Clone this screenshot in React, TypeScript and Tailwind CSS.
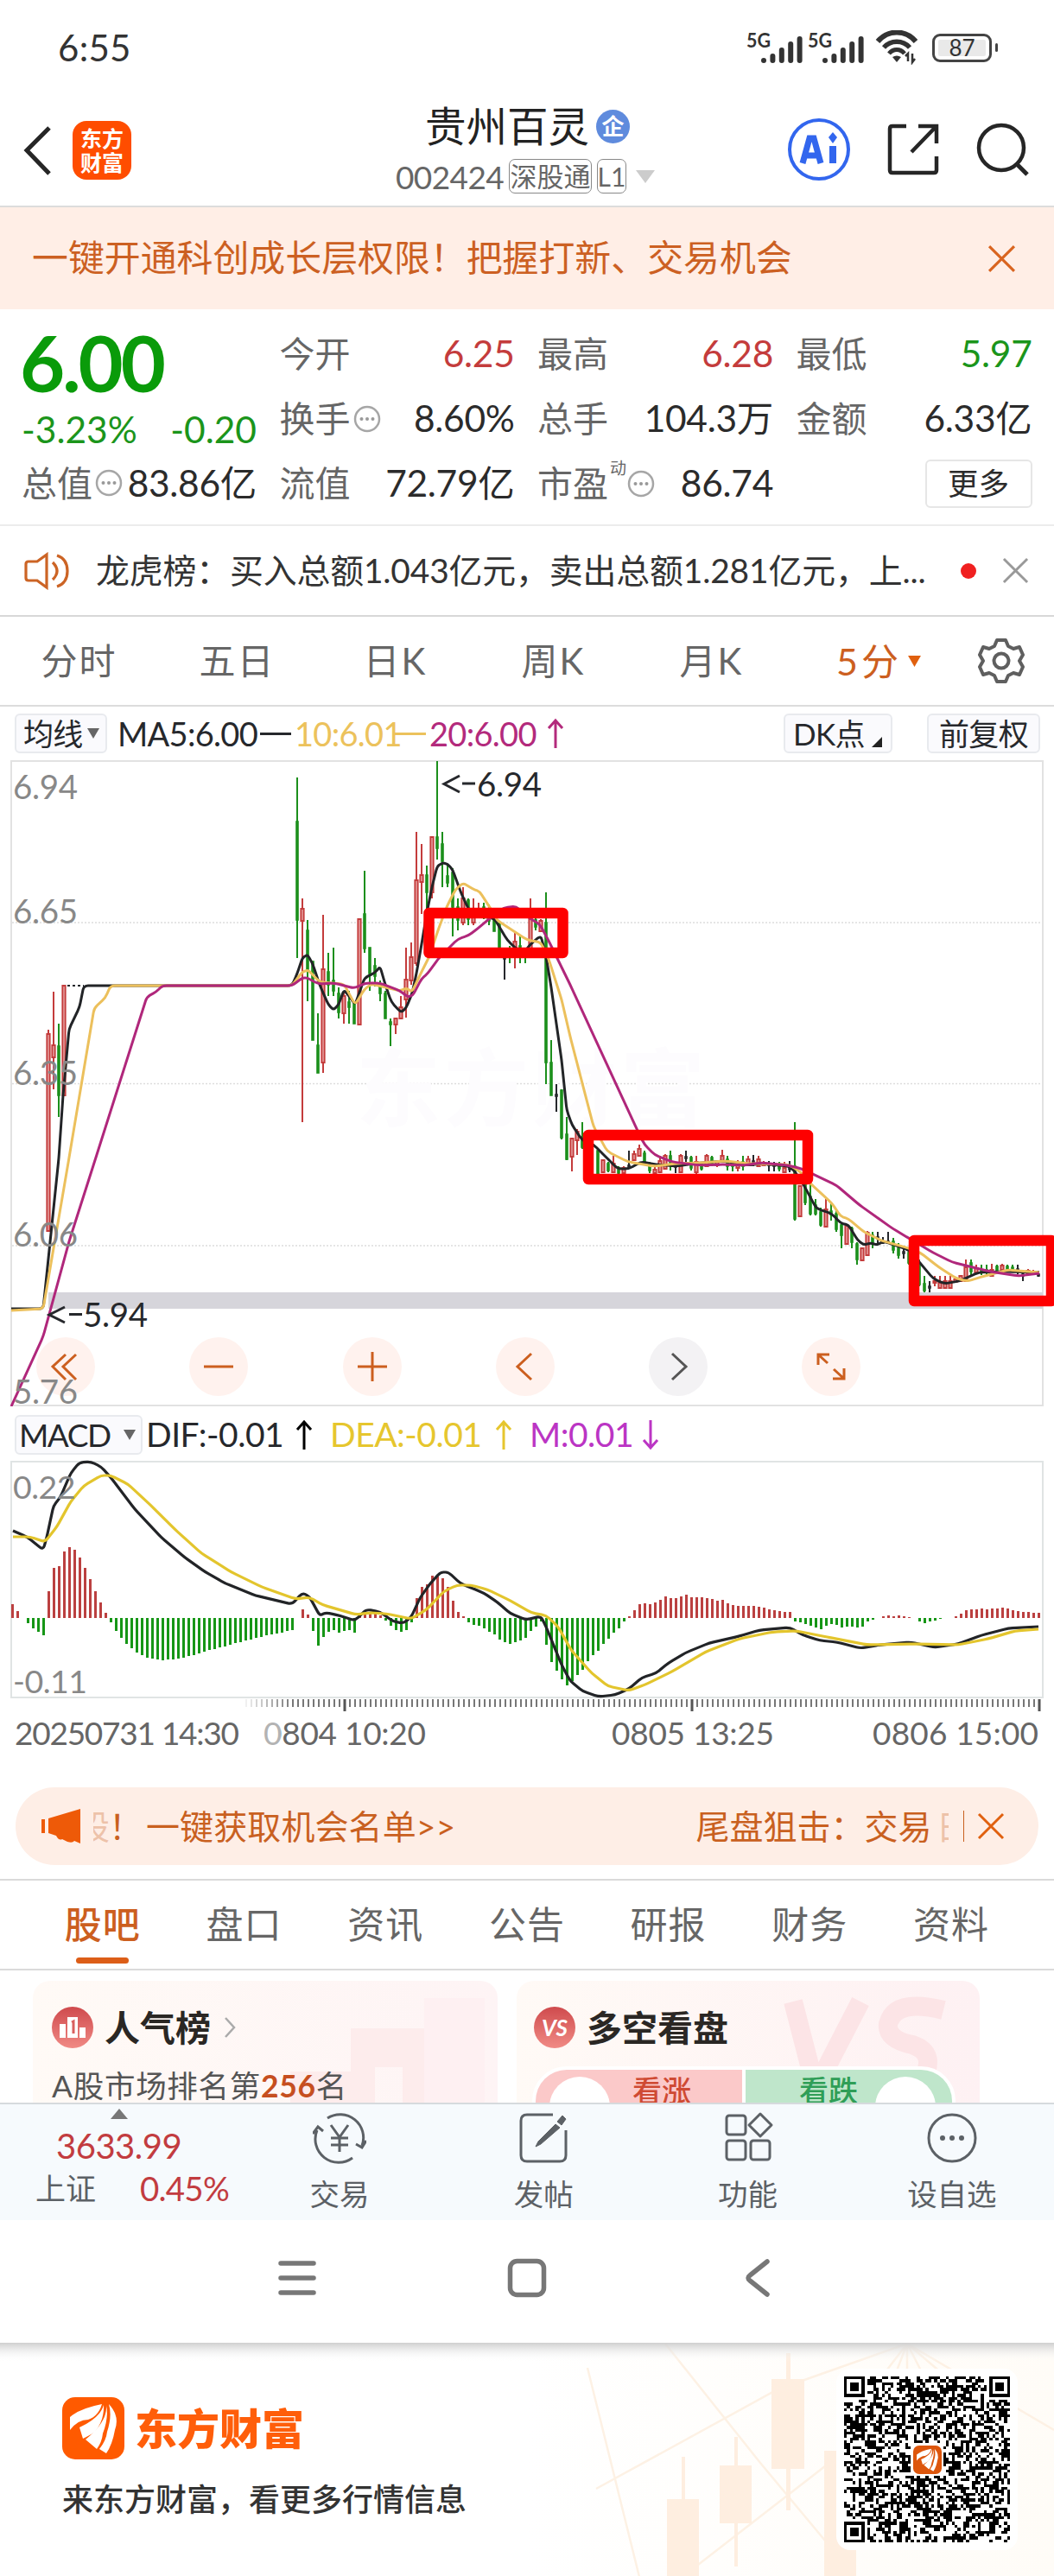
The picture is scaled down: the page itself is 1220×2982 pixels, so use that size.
import { ReactNode } from "react";
import clsx from "clsx";

type Point = [number, number];
type Tone = "r" | "g" | "k";
// slot, high, body top, body bottom, low, tone
type Candle = [number, number, number, number, number, Tone];

const STEP = 6;
const ORIGIN = 344;
const ZERO_Y = 1873;

const TONES = { r: "#c43c3c", g: "#1c8f1c", k: "#26282c" };

const CANDLES: Candle[] = [
  [-48, 1192, 1197, 1425, 1425, "r"],
  [-47, 1148, 1210, 1224, 1261, "r"],
  [-46, 1185, 1211, 1268, 1293, "g"],
  [-45, 1141, 1141, 1268, 1268, "r"],
  [0, 900, 951, 1065, 1109, "g"],
  [1, 1040, 1052, 1066, 1299, "r"],
  [2, 1065, 1077, 1122, 1159, "g"],
  [3, 1113, 1113, 1204, 1204, "g"],
  [4, 1173, 1210, 1242, 1242, "g"],
  [5, 1059, 1122, 1230, 1242, "r"],
  [6, 1103, 1125, 1140, 1153, "g"],
  [7, 1097, 1135, 1147, 1153, "g"],
  [8, 1143, 1150, 1172, 1179, "g"],
  [9, 1147, 1153, 1173, 1185, "r"],
  [10, 1147, 1160, 1166, 1185, "g"],
  [11, 1160, 1160, 1185, 1185, "g"],
  [12, 1064, 1064, 1186, 1186, "r"],
  [13, 1008, 1058, 1098, 1103, "g"],
  [14, 1097, 1097, 1127, 1147, "g"],
  [15, 1109, 1118, 1130, 1142, "g"],
  [16, 1135, 1140, 1150, 1159, "g"],
  [17, 1147, 1150, 1179, 1179, "g"],
  [18, 1179, 1183, 1186, 1211, "g"],
  [19, 1179, 1179, 1186, 1197, "r"],
  [20, 1153, 1166, 1179, 1179, "r"],
  [21, 1097, 1134, 1157, 1178, "r"],
  [22, 1091, 1108, 1135, 1140, "r"],
  [23, 963, 1019, 1115, 1118, "r"],
  [24, 977, 1013, 1021, 1058, "r"],
  [25, 1002, 1013, 1033, 1055, "g"],
  [26, 969, 969, 1033, 1040, "r"],
  [27, 881, 969, 982, 995, "g"],
  [28, 963, 977, 997, 1027, "g"],
  [29, 1000, 1014, 1022, 1027, "g"],
  [30, 1005, 1010, 1050, 1084, "g"],
  [31, 1040, 1050, 1065, 1077, "g"],
  [32, 1027, 1040, 1068, 1071, "r"],
  [33, 1040, 1042, 1064, 1071, "g"],
  [34, 1040, 1055, 1068, 1071, "r"],
  [35, 1045, 1052, 1058, 1063, "r"],
  [36, 1045, 1050, 1060, 1064, "g"],
  [37, 1047, 1055, 1066, 1071, "g"],
  [38, 1060, 1062, 1078, 1078, "g"],
  [39, 1066, 1070, 1100, 1100, "g"],
  [40, 1097, 1108, 1110, 1134, "k"],
  [41, 1095, 1100, 1108, 1115, "g"],
  [42, 1078, 1090, 1108, 1121, "r"],
  [43, 1083, 1095, 1103, 1115, "g"],
  [44, 1097, 1100, 1108, 1115, "g"],
  [45, 1040, 1064, 1100, 1100, "r"],
  [46, 1063, 1065, 1073, 1077, "g"],
  [47, 1064, 1066, 1078, 1078, "r"],
  [48, 1033, 1068, 1230, 1255, "g"],
  [49, 1204, 1230, 1268, 1268, "g"],
  [50, 1255, 1267, 1269, 1287, "k"],
  [51, 1261, 1262, 1317, 1319, "g"],
  [52, 1293, 1313, 1342, 1343, "g"],
  [53, 1318, 1318, 1339, 1356, "r"],
  [54, 1307, 1310, 1320, 1337, "r"],
  [55, 1299, 1318, 1328, 1330, "g"],
  [58, 1332, 1332, 1360, 1360, "g"],
  [59, 1343, 1343, 1357, 1357, "r"],
  [60, 1345, 1347, 1355, 1357, "g"],
  [61, 1338, 1347, 1357, 1357, "r"],
  [62, 1350, 1352, 1358, 1360, "g"],
  [63, 1350, 1352, 1358, 1358, "r"],
  [64, 1332, 1349, 1351, 1352, "k"],
  [65, 1332, 1336, 1343, 1343, "r"],
  [66, 1325, 1330, 1338, 1338, "r"],
  [67, 1332, 1335, 1345, 1348, "g"],
  [68, 1345, 1347, 1355, 1358, "g"],
  [69, 1350, 1354, 1358, 1358, "r"],
  [70, 1338, 1344, 1357, 1357, "r"],
  [71, 1336, 1338, 1353, 1353, "r"],
  [72, 1332, 1338, 1346, 1355, "g"],
  [73, 1345, 1349, 1351, 1358, "k"],
  [74, 1336, 1338, 1357, 1357, "r"],
  [75, 1332, 1339, 1341, 1345, "k"],
  [76, 1338, 1340, 1352, 1355, "g"],
  [77, 1338, 1345, 1357, 1360, "r"],
  [78, 1345, 1347, 1353, 1355, "g"],
  [79, 1336, 1338, 1350, 1350, "r"],
  [80, 1338, 1340, 1346, 1350, "g"],
  [81, 1344, 1345, 1349, 1351, "r"],
  [82, 1331, 1338, 1344, 1344, "r"],
  [83, 1338, 1342, 1350, 1355, "g"],
  [84, 1345, 1347, 1350, 1356, "g"],
  [85, 1343, 1346, 1352, 1356, "r"],
  [86, 1338, 1345, 1350, 1355, "g"],
  [87, 1338, 1342, 1348, 1350, "r"],
  [88, 1337, 1344, 1346, 1350, "k"],
  [89, 1338, 1342, 1350, 1350, "r"],
  [90, 1344, 1346, 1349, 1350, "r"],
  [91, 1344, 1347, 1349, 1356, "k"],
  [92, 1345, 1348, 1350, 1356, "k"],
  [93, 1345, 1348, 1353, 1356, "g"],
  [94, 1345, 1352, 1357, 1357, "r"],
  [95, 1344, 1352, 1354, 1357, "k"],
  [96, 1299, 1350, 1411, 1413, "g"],
  [97, 1372, 1373, 1408, 1408, "r"],
  [98, 1365, 1368, 1392, 1395, "g"],
  [99, 1368, 1385, 1405, 1407, "g"],
  [100, 1388, 1395, 1405, 1407, "g"],
  [101, 1398, 1403, 1418, 1420, "g"],
  [102, 1388, 1400, 1420, 1420, "r"],
  [103, 1393, 1402, 1406, 1413, "g"],
  [104, 1401, 1405, 1423, 1426, "g"],
  [105, 1415, 1418, 1430, 1445, "g"],
  [106, 1417, 1419, 1440, 1440, "r"],
  [107, 1420, 1422, 1438, 1445, "g"],
  [108, 1438, 1440, 1458, 1464, "g"],
  [109, 1444, 1445, 1459, 1459, "r"],
  [110, 1425, 1427, 1453, 1453, "r"],
  [111, 1426, 1430, 1438, 1445, "g"],
  [112, 1426, 1432, 1434, 1439, "k"],
  [113, 1432, 1437, 1439, 1440, "k"],
  [114, 1426, 1437, 1439, 1440, "k"],
  [115, 1433, 1437, 1447, 1451, "g"],
  [116, 1439, 1445, 1453, 1457, "g"],
  [117, 1442, 1449, 1451, 1457, "k"],
  [118, 1445, 1450, 1462, 1464, "g"],
  [120, 1458, 1462, 1487, 1489, "g"],
  [121, 1477, 1486, 1494, 1496, "g"],
  [122, 1483, 1489, 1491, 1496, "k"],
  [123, 1477, 1483, 1485, 1489, "r"],
  [124, 1477, 1485, 1491, 1491, "r"],
  [125, 1477, 1483, 1491, 1491, "r"],
  [126, 1477, 1483, 1491, 1491, "r"],
  [127, 1478, 1481, 1484, 1485, "r"],
  [128, 1476, 1477, 1483, 1484, "r"],
  [129, 1458, 1467, 1483, 1484, "r"],
  [130, 1458, 1462, 1472, 1476, "g"],
  [131, 1464, 1468, 1473, 1475, "r"],
  [132, 1464, 1470, 1473, 1476, "g"],
  [133, 1464, 1470, 1473, 1476, "g"],
  [134, 1463, 1470, 1477, 1477, "r"],
  [135, 1464, 1466, 1472, 1473, "g"],
  [136, 1463, 1465, 1470, 1472, "r"],
  [137, 1464, 1466, 1470, 1472, "g"],
  [138, 1464, 1467, 1470, 1473, "g"],
  [139, 1464, 1469, 1471, 1475, "k"],
  [140, 1470, 1475, 1477, 1483, "k"],
  [141, 1469, 1471, 1474, 1476, "r"],
  [142, 1470, 1472, 1474, 1476, "r"],
  [143, 1471, 1475, 1477, 1478, "k"],
];

const MA5: Point[] = [[13, 1515], [50, 1515], [68, 1341], [73, 1268], [80, 1191], [92, 1166], [97, 1141], [338, 1141], [344, 1127], [350, 1109], [356, 1105], [362, 1116], [370, 1140], [380, 1163], [386, 1169], [392, 1163], [398, 1146], [404, 1153], [411, 1163], [422, 1132], [434, 1126], [440, 1119], [446, 1140], [453, 1160], [464, 1172], [470, 1167], [477, 1150], [482, 1127], [488, 1093], [494, 1057], [500, 1027], [506, 1003], [512, 999], [518, 1000], [524, 1007], [533, 1032], [542, 1052], [550, 1060], [572, 1063], [578, 1073], [587, 1088], [597, 1098], [607, 1102], [614, 1093], [626, 1083], [632, 1107], [638, 1143], [650, 1227], [656, 1285], [662, 1302], [674, 1320], [687, 1325], [702, 1340], [715, 1353], [728, 1353], [742, 1345], [760, 1348], [783, 1350], [803, 1347], [837, 1344], [867, 1349], [880, 1347], [913, 1350], [920, 1356], [931, 1373], [945, 1399], [963, 1405], [973, 1416], [982, 1418], [993, 1436], [1000, 1441], [1008, 1439], [1015, 1441], [1023, 1437], [1052, 1447], [1065, 1462], [1080, 1480], [1093, 1486], [1110, 1483], [1133, 1473], [1160, 1472], [1203, 1473]];
const MA10: Point[] = [[13, 1517], [50, 1515], [80, 1340], [109, 1167], [122, 1155], [128, 1141], [338, 1141], [350, 1125], [357, 1123], [370, 1137], [398, 1139], [411, 1163], [422, 1145], [430, 1139], [463, 1147], [470, 1144], [477, 1148], [487, 1127], [497, 1107], [507, 1077], [517, 1050], [527, 1030], [536, 1022], [547, 1029], [555, 1032], [570, 1055], [575, 1065], [610, 1088], [626, 1091], [635, 1110], [650, 1157], [660, 1200], [674, 1254], [687, 1304], [703, 1333], [727, 1345], [757, 1350], [783, 1347], [810, 1346], [840, 1344], [867, 1347], [913, 1348], [927, 1357], [938, 1370], [963, 1393], [973, 1408], [982, 1411], [1000, 1426], [1020, 1436], [1052, 1445], [1065, 1450], [1087, 1467], [1107, 1480], [1120, 1483], [1140, 1477], [1167, 1470], [1203, 1473]];
const MA20: Point[] = [[13, 1628], [50, 1547], [80, 1437], [110, 1343], [170, 1154], [181, 1148], [188, 1141], [338, 1141], [350, 1132], [356, 1132], [368, 1139], [387, 1138], [410, 1144], [423, 1138], [440, 1138], [463, 1147], [472, 1154], [478, 1152], [488, 1133], [495, 1127], [508, 1109], [530, 1087], [542, 1083], [553, 1075], [568, 1062], [583, 1051], [597, 1049], [613, 1063], [625, 1070], [637, 1093], [660, 1140], [738, 1309], [746, 1325], [758, 1337], [778, 1345], [810, 1349], [837, 1348], [861, 1349], [881, 1346], [912, 1349], [928, 1353], [968, 1372], [995, 1395], [1033, 1422], [1053, 1434], [1080, 1450], [1102, 1461], [1146, 1472], [1179, 1477], [1203, 1474]];

const DIF: Point[] = [[15, 1772], [31, 1779], [50, 1794], [54, 1780], [62, 1743], [70, 1733], [82, 1705], [92, 1693], [105, 1692], [117, 1698], [128, 1710], [156, 1747], [187, 1780], [214, 1803], [238, 1820], [261, 1833], [296, 1847], [338, 1857], [350, 1844], [358, 1848], [370, 1870], [377, 1867], [389, 1869], [411, 1876], [424, 1863], [440, 1866], [455, 1877], [467, 1879], [476, 1872], [486, 1850], [498, 1833], [510, 1820], [519, 1820], [533, 1833], [545, 1838], [560, 1844], [576, 1855], [591, 1868], [609, 1875], [626, 1871], [632, 1883], [650, 1927], [660, 1946], [675, 1958], [693, 1964], [712, 1962], [728, 1955], [743, 1942], [759, 1937], [774, 1925], [794, 1913], [821, 1902], [856, 1894], [879, 1887], [914, 1884], [930, 1893], [949, 1899], [969, 1901], [996, 1908], [1019, 1904], [1054, 1901], [1082, 1907], [1109, 1903], [1136, 1893], [1167, 1885], [1202, 1883]];
const DEA: Point[] = [[15, 1779], [35, 1779], [52, 1785], [66, 1767], [82, 1738], [97, 1720], [117, 1708], [128, 1708], [148, 1718], [175, 1743], [202, 1770], [233, 1798], [268, 1820], [303, 1837], [342, 1851], [358, 1849], [374, 1858], [412, 1869], [428, 1867], [447, 1868], [476, 1874], [494, 1863], [514, 1842], [529, 1835], [545, 1835], [564, 1840], [591, 1853], [615, 1867], [632, 1870], [646, 1883], [661, 1910], [685, 1937], [704, 1952], [728, 1957], [747, 1950], [778, 1935], [817, 1912], [856, 1897], [895, 1889], [922, 1888], [957, 1895], [1004, 1904], [1058, 1903], [1109, 1904], [1144, 1897], [1175, 1888], [1202, 1886]];

// histogram heights, first entry sits in slot -55
const HISTOGRAM = [
  16, 8, 0, -6, -12, -16, -20, 31, 58, 60, 77, 82, 79, 70, 58, 45, 31, 18, 6,
  -5, -15, -23, -30, -35, -40, -43, -46, -47, -48, -49, -48, -48, -47, -46,
  -44, -43, -41, -39, -37, -36, -34, -33, -31, -29, -28, -26, -25, -23, -22,
  -20, -19, -18, -17, -15, -14, 0, 10, 4, -15, -32, -22, -16, -14, -17, -15,
  -14, -17, 6, 7, 7, 6, 3, -3, -9, -14, -16, -14, -5, 23, 36, 39, 49, 48, 46,
  36, 20, 7, 2, -5, -8, -9, -12, -16, -19, -25, -28, -30, -28, -26, -23, -15,
  -10, -4, -31, -51, -61, -71, -78, -73, -66, -60, -50, -43, -38, -30, -24,
  -17, -12, -4, 2, 9, 16, 17, 16, 18, 21, 25, 23, 23, 25, 27, 24, 24, 24, 23,
  22, 20, 21, 17, 15, 14, 14, 14, 14, 13, 12, 10, 9, 8, 7, 7, -4, -5, -7, -9,
  -11, -13, -9, -7, -8, -11, -10, -10, -11, -10, -4, -2, 0, 2, 3, 2, 3, 2, 1,
  0, -4, -6, -4, -3, -1, 0, 0, 2, 5, 9, 10, 10, 11, 10, 11, 11, 12, 11, 9, 8,
  7, 7, 6, 6,
];

// rounds each corner by at most a few pixels
const smooth = (pts: Point[]) => {
  let d = `M${pts[0][0]} ${pts[0][1]}`;
  for (let i = 1; i < pts.length - 1; i++) {
    const [x, y] = pts[i];
    const [px, py] = pts[i - 1];
    const [nx, ny] = pts[i + 1];
    const before = Math.min(0.35, 5 / Math.hypot(x - px, y - py));
    const after = Math.min(0.35, 5 / Math.hypot(nx - x, ny - y));
    d += `L${x - (x - px) * before} ${y - (y - py) * before}`;
    d += `Q${x} ${y} ${x + (nx - x) * after} ${y + (ny - y) * after}`;
  }
  const last = pts[pts.length - 1];
  return `${d}L${last[0]} ${last[1]}`;
};

const Close = ({ className, size = 32 }: { className?: string; size?: number }) => (
  <svg width={size} height={size} viewBox="0 0 32 32" className={className}>
    <path d="M2 2L30 30M30 2L2 30" stroke="currentColor" strokeWidth="3" fill="none" />
  </svg>
);

const Info = () => (
  <svg width="32" height="32" viewBox="0 0 32 32" className="ml-[3px] shrink-0">
    <circle cx="16" cy="16" r="14" fill="none" stroke="#a6a6a6" strokeWidth="2.5" />
    <g fill="#999">
      <circle cx="9.5" cy="16" r="2" />
      <circle cx="16" cy="16" r="2" />
      <circle cx="22.5" cy="16" r="2" />
    </g>
  </svg>
);

const Signal = () => (
  <svg width="68" height="40" viewBox="0 -4 68 40" className="overflow-visible">
    <text x="0" y="16" fontSize="22" fontWeight="700" fill="#333" textLength="28" lengthAdjust="spacingAndGlyphs">5G</text>
    {[27, 22, 15, 8, 2].map((top, i) => (
      <rect key={top} x={17 + i * 10.4} y={top + 1} width="6" height={33 - top} rx="3" fill="#333" />
    ))}
  </svg>
);

const StatusBar = () => (
  <div className="flex h-[110px] items-center justify-between pl-[67px] pr-[65px] text-[#333]">
    <span className="text-[42px] tracking-[0.3px]">6:55</span>
    <div className="flex items-center">
      <Signal />
      <div className="w-[3px]" />
      <Signal />
      <svg width="52" height="40" viewBox="0 0 52 40" className="ml-[10px]" fill="none" stroke="#333">
        <path d="M3 13C15-1 35-1 47 13" strokeWidth="6" />
        <path d="M10 20C18 11 32 11 40 20" strokeWidth="5.5" />
        <path d="M16 27C21 21 29 21 34 27" strokeWidth="5" />
        <path d="M20 31L25 37L30 31Q25 28 20 31Z" fill="#333" stroke="none" />
        <path d="M38 36V27L35 30M43 27V37L46 33" strokeWidth="2.5" />
      </svg>
      <div className="ml-[14px] flex h-[33px] w-[69px] items-center justify-center rounded-[9px] border-[3.5px] border-[#444] bg-[#e9e9e9] text-[26px] leading-none shadow-[inset_0_0_0_4px_#fff]">
        87
      </div>
      <div className="ml-1 h-[10px] w-[3px] rounded bg-[#444]" />
    </div>
  </div>
);

const Header = () => (
  <header className="flex h-[130px] items-center border-b-2 border-[#dcdcdc]">
    <svg width="36" height="60" viewBox="0 0 36 60" className="ml-[26px]">
      <path d="M31 4L5 30L31 57" fill="none" stroke="#262626" strokeWidth="5" />
    </svg>
    <div className="ml-[22px] flex h-[68px] w-[68px] flex-col items-center justify-center rounded-[16px] bg-[#ff4d00] text-[25px] font-bold leading-[28px] text-white">
      <span>东方</span>
      <span>财富</span>
    </div>
    <div className="ml-[306px] w-[310px]">
      <div className="flex h-[60px] items-center pl-[34px] pt-[2px]">
        <span className="text-[47.5px] leading-none text-[#222]">贵州百灵</span>
        <span className="ml-[8px] flex h-[39px] w-[39px] items-center justify-center rounded-full bg-[#5f8bdd] text-[26px] font-bold leading-none text-white">
          企
        </span>
      </div>
      <div className="flex h-[58px] items-center text-[#666]">
        <span className="w-[131px] text-[37px] leading-none tracking-[-0.6px]">002424</span>
        <span className="flex h-[40px] w-[96px] items-center justify-center rounded-[7px] border-[1.5px] border-[#888] text-[31px] leading-none">
          深股通
        </span>
        <span className="ml-[6px] flex h-[40px] w-[34px] items-center justify-center rounded-[7px] border-[1.5px] border-[#888] text-[30px] leading-none">
          L1
        </span>
        <svg width="22" height="15" viewBox="0 0 22 15" className="ml-[11px]">
          <path d="M0 0H22L11 15Z" fill="#ccc" />
        </svg>
      </div>
    </div>
    <svg width="74" height="74" viewBox="0 0 74 74" className="ml-[143px]">
      <circle cx="37" cy="36" r="34" fill="#fff" stroke="#3266ee" strokeWidth="4" />
      <g fill="none" stroke="#3266ee" strokeWidth="7">
        <path d="M18 52L26 23H31L39 52M22 43H36" />
        <path d="M53 32V52" strokeWidth="8" />
      </g>
      <path d="M53 16L58 22L53 29L48 22Z" fill="#3266ee" />
    </svg>
    <svg width="64" height="64" viewBox="0 0 64 64" className="ml-[40px]" fill="none" stroke="#262626" strokeWidth="4.5">
      <path d="M24 4H8Q5 4 5 7V55Q5 58 8 58H56Q59 58 59 55V39" />
      <path d="M38 4H59V24M58 5L30 34" />
    </svg>
    <svg width="64" height="64" viewBox="0 0 64 64" className="ml-[41px]" fill="none" stroke="#262626" strokeWidth="4.5">
      <circle cx="29" cy="29" r="26" />
      <path d="M47 48L59 60" strokeWidth="5" />
    </svg>
  </header>
);

const Field = ({ label, value, tone = "text-[#2b2b2b]", info, sup }: { label: string; value: string; tone?: string; info?: boolean; sup?: string }) => (
  <div className="flex h-[75px] items-center">
    <span className="text-[41px] text-[#666]">{label}</span>
    {sup && <span className="-mr-[2px] ml-[2px] -mt-[36px] text-[19px] text-[#666]">{sup}</span>}
    {info && <Info />}
    <span className={clsx("ml-auto text-[42.5px] tracking-[-0.3px]", tone)}>{value}</span>
  </div>
);

const Quote = () => (
  <section className="grid h-[251px] grid-cols-[272px_272px_273px_273px] gap-x-[26.5px] border-b-2 border-[#ececec] pl-[25px] pt-[14px] leading-none">
    <div>
      <div className="-ml-[2px] flex h-[94px] items-center text-[90px] font-bold tracking-[-3px] text-[#0a9b0a]">
        6.00
      </div>
      <div className="flex h-[62px] items-center justify-between text-[42.5px] text-[#1b951b]">
        <span>-3.23%</span>
        <span>-0.20</span>
      </div>
      <div className="flex h-[62px] items-center">
        <span className="text-[41px] text-[#666]">总值</span>
        <Info />
        <span className="ml-auto text-[42.5px] tracking-[-0.3px] text-[#2b2b2b]">83.86亿</span>
      </div>
    </div>
    <div>
      <Field label="今开" value="6.25" tone="text-[#c43c3c]" />
      <Field label="换手" value="8.60%" info />
      <Field label="流值" value="72.79亿" />
    </div>
    <div>
      <Field label="最高" value="6.28" tone="text-[#c43c3c]" />
      <Field label="总手" value="104.3万" />
      <Field label="市盈" value="86.74" sup="动" info />
    </div>
    <div>
      <Field label="最低" value="5.97" tone="text-[#1b951b]" />
      <Field label="金额" value="6.33亿" />
      <div className="flex h-[75px] items-center justify-end">
        <button className="h-[56px] w-[124px] rounded-md border-2 border-[#e6e6e6] text-[35.5px] leading-none text-[#2b2b2b]">
          更多
        </button>
      </div>
    </div>
  </section>
);

const News = () => (
  <div className="flex h-[105px] items-center border-b-2 border-[#d8d8d8]">
    <svg width="54" height="44" viewBox="0 0 54 44" className="ml-[28px]" fill="none" stroke="#cc6425" strokeWidth="3.2">
      <path d="M26 3L15 11H5Q2 11 2 14V30Q2 33 5 33H15L26 41Z" />
      <path d="M33 12Q43 22 33 32M38 4Q50 8 50 22Q50 36 38 40" />
    </svg>
    <span className="ml-[29px] w-[982px] whitespace-nowrap text-[38.9px] leading-none tracking-[-0.15px] text-[#333]">
      龙虎榜：买入总额1.043亿元，卖出总额1.281亿元，上...
    </span>
    <span className="ml-[19px] h-[18px] w-[18px] rounded-full bg-[#f02020]" />
    <Close className="ml-[30px] text-[#999]" size={31} />
  </div>
);

const PERIODS = ["分时", "五日", "日K", "周K", "月K"];

const Periods = () => (
  <nav className="flex h-[104px] items-center border-b-2 border-[#dcdcdc] text-[42px] leading-none tracking-[2px] text-[#666]">
    {PERIODS.map((period) => (
      <span key={period} className="w-[183px] text-center">
        {period}
      </span>
    ))}
    <span className="ml-[53px] w-[88px] whitespace-nowrap text-[43px] tracking-[4px] text-[#cc5f1f]">5分</span>
    <svg width="15" height="13" viewBox="0 0 16 14" className="-ml-[5px]">
      <path d="M0 0H16L8 14Z" fill="#e0600f" />
    </svg>
    <svg width="54" height="54" viewBox="0 0 54 54" className="ml-[66px]" fill="none" stroke="#5f5f5f" strokeWidth="4" strokeLinejoin="round">
      <path d="M22 3H32L35 10L41 13L48 11L52 20L48 27L52 34L48 43L41 41L35 44L32 51H22L19 44L13 41L6 43L2 34L6 27L2 20L6 11L13 13L19 10Z" />
      <circle cx="27" cy="27" r="8.5" />
    </svg>
  </nav>
);

const Chip = ({ children, className }: { children: ReactNode; className?: string }) => (
  <span className={clsx("flex h-[46px] shrink-0 items-center rounded-md border-2 border-[#e8eaee] bg-[#fafafd] text-[35px] text-[#26282c]", className)}>
    {children}
  </span>
);

const Down = ({ className }: { className?: string }) => (
  <svg width="14" height="12" viewBox="0 0 14 12" className={className}>
    <path d="M0 0H14L7 12Z" fill="#666" />
  </svg>
);

const Arrow = ({ down, className }: { down?: boolean; className?: string }) => (
  <svg width="20" height="36" viewBox="0 0 20 36" className={clsx(className, down && "rotate-180")}>
    <path d="M10 35V3M2 12L10 3L18 12" fill="none" stroke="currentColor" strokeWidth="3" />
  </svg>
);

const MaLegend = () => (
  <div className="flex h-[62px] items-center whitespace-nowrap pl-[17px] text-[38px] leading-none tracking-[-0.7px]">
    <Chip className="w-[107px] pl-[8px]">
      均线
      <Down className="ml-[5px]" />
    </Chip>
    <span className="ml-[12px] w-[165px] text-[#26282c]">MA5:6.00</span>
    <span className="h-[3px] w-[36px] bg-[#26282c]" />
    <span className="ml-[4px] w-[116px] text-[#ecc25c]">10:6.01</span>
    <span className="h-[3px] w-[36px] bg-[#ecc25c]" />
    <span className="ml-[4px] w-[136px] text-[#b32a7c]">20:6.00</span>
    <Arrow className="text-[#b32a7c]" />
    <Chip className="ml-auto w-[126px] pl-[9px]">
      DK点
      <svg width="12" height="12" viewBox="0 0 12 12" className="ml-[8px] mt-[20px]">
        <path d="M12 0V12H0Z" fill="#222" />
      </svg>
    </Chip>
    <Chip className="ml-[40px] mr-[16px] w-[131px] justify-center">前复权</Chip>
  </div>
);

const Tool = ({ d, gray }: { d: string; gray?: boolean }) => (
  <span className={clsx("flex h-[68px] w-[68px] items-center justify-center rounded-full", gray ? "bg-[#f3f2f4] text-[#555]" : "bg-[#fff2ee] text-[#cc5f1f]")}>
    <svg width="34" height="34" viewBox="0 0 34 34">
      <path d={d} fill="none" stroke="currentColor" strokeWidth="3" />
    </svg>
  </span>
);

const KChart = () => (
  <div className="relative h-[748px]">
    <div className="absolute left-[42px] top-[668px] flex gap-[109.3px]">
      <Tool d="M17 3L2 17L17 32M29 3L14 17L29 32" />
      <Tool d="M0 17H34" />
      <Tool d="M0 17H34M17 0V34" />
      <Tool d="M24 2L8 17L24 32" />
      <Tool d="M10 2L26 17L10 32" gray />
      <Tool d="M2 15V3H15M2 3L13 13M32 19V31H19M32 31L20 20" />
    </div>
    <svg width="1220" height="748" viewBox="0 880 1220 748" className="absolute inset-0">
      <rect x="13" y="881" width="1194" height="746" fill="none" stroke="#e2e2e2" strokeWidth="2" />
      {[1068, 1254.5, 1442].map((y) => (
        <path key={y} d={`M14 ${y}H1206`} stroke="#ddd" strokeWidth="1.5" strokeDasharray="2 2" />
      ))}
      <text x="412" y="1296" fontSize="98" fontWeight="700" fill="#fdfcfe" letterSpacing="4">东方财富</text>
      <rect x="56" y="1496" width="1151" height="19" fill="#d6d5db" />
      {CANDLES.map(([slot, high, top, bottom, low, tone]) => {
        const x = ORIGIN + slot * STEP;
        const hollow = tone === "r";
        return (
          <g key={slot} stroke={TONES[tone]} strokeWidth="2">
            <path d={`M${x} ${high}V${hollow ? top : low}M${x} ${bottom}V${low}`} />
            <rect
              x={x - (hollow ? 1.6 : 1)}
              y={top}
              width={hollow ? 3.2 : 2}
              height={bottom - top}
              fill={hollow ? "#f0bcbc" : TONES[tone]}
              strokeWidth={hollow ? 2 : 1.6}
            />
          </g>
        );
      })}
      <path d="M78 1141H97" stroke="#26282c" strokeWidth="2" strokeDasharray="3 3" />
      <g fill="none" strokeWidth="3">
        <path d={smooth(MA5)} stroke="#222427" />
        <path d={smooth(MA10)} stroke="#ecc05c" />
        <path d={smooth(MA20)} stroke="#b0277b" />
      </g>
      <g fontSize="38.5" fill="#888" letterSpacing="-0.3">
        <text x="15" y="925">6.94</text>
        <text x="15" y="1069">6.65</text>
        <text x="15" y="1256">6.35</text>
        <text x="15" y="1443">6.06</text>
        <text x="15" y="1625">5.76</text>
      </g>
      <g fill="none" stroke="#26282c" strokeWidth="3">
        <path d="M532 898L514 907.5L532 917M535 907H550" />
        <path d="M75 1513L57 1522L75 1531M80 1521.5H95" />
      </g>
      <g fontSize="38.5" fill="#26282c" letterSpacing="-0.3">
        <text x="552" y="922">6.94</text>
        <text x="96" y="1536">5.94</text>
      </g>
    </svg>
    <svg width="1220" height="748" viewBox="0 880 1220 748" className="absolute inset-0" fill="none" stroke="#fe0000" strokeWidth="12.5" strokeLinejoin="round">
      <rect x="496.5" y="1057" width="155" height="46" />
      <rect x="681" y="1314" width="254" height="51" />
      <rect x="1058" y="1436" width="159" height="70" />
    </svg>
  </div>
);

const MacdLegend = () => (
  <div className="flex h-[62px] items-center whitespace-nowrap pl-[17px] pt-[3px] text-[39px] leading-none tracking-[-0.5px]">
    <Chip className="w-[148px] bg-[#f7fbfc] pl-[3px]">
      <span className="w-[114px] text-[37px] tracking-[-1.5px]">MACD</span>
      <Down className="ml-[7px]" />
    </Chip>
    <span className="ml-[4px] w-[173px] text-[#26282c]">DIF:-0.01</span>
    <Arrow />
    <span className="ml-[20px] w-[191px] text-[#e6c62e]">DEA:-0.01</span>
    <Arrow className="text-[#e6c62e]" />
    <span className="ml-[20px] w-[130px] text-[#bb35c4]">M:0.01</span>
    <Arrow down className="text-[#bb35c4]" />
  </div>
);

const MacdChart = () => (
  <svg width="1220" height="350" viewBox="0 1690 1220 350" className="block">
    <rect x="13" y="1692" width="1194" height="273" fill="none" stroke="#e0e4e4" strokeWidth="2" />
    {HISTOGRAM.map((h, i) => (
      <rect
        key={i}
        x={ORIGIN + (i - 55) * STEP - 1}
        y={h > 0 ? ZERO_Y - h : ZERO_Y}
        width="3"
        height={Math.abs(h)}
        fill={h > 0 ? "#bb4040" : "#169616"}
      />
    ))}
    <g fill="none" strokeWidth="3.2">
      <path d={smooth(DIF)} stroke="#222427" />
      <path d={smooth(DEA)} stroke="#e3c52d" />
    </g>
    {Array.from({ length: 154 }, (_, i) => 285 + i * STEP).map((x, i) => (
      <path key={x} d={`M${x} 1967V1976`} stroke="#777" strokeWidth="2" opacity={Math.min(1, 0.1 + i * 0.1)} />
    ))}
    <path d="M399 1967V1981M801 1967V1981M1203 1967V1981" stroke="#555" strokeWidth="3" />
    <g fontSize="37.5" fill="#888" letterSpacing="-0.5">
      <text x="15" y="1735">0.22</text>
      <text x="15" y="1960">-0.11</text>
    </g>
    <g fontSize="37" fill="#666" lengthAdjust="spacing">
      <text x="17" y="2020" textLength="260">20250731 14:30</text>
      <text x="305" y="2020" textLength="188">0804 10:20</text>
      <text x="708" y="2020" textLength="188">0805 13:25</text>
      <text x="1010" y="2020" textLength="192">0806 15:00</text>
    </g>
    <rect x="300" y="1990" width="25" height="40" fill="#fff" opacity="0.5" />
  </svg>
);

const Promo = () => (
  <div className="mx-[18px] mt-[29px] flex h-[90px] items-center rounded-full bg-[#feeee6] text-[39px] leading-none text-[#c9601f]">
    <svg width="46" height="40" viewBox="0 0 46 40" className="ml-[30px]">
      <path d="M0 12H4V28H0ZM8 11L45 0V40L38 37Q36 40 30 38L24 35Q20 37 17 31L8 28Z" fill="#ee5a08" />
    </svg>
    <span className="ml-[14px] w-[18px] overflow-hidden opacity-30">
      <span className="-ml-[20px]">股</span>
    </span>
    <span className="w-[43px]">！</span>
    <span className="whitespace-nowrap tracking-[0.1px]">一键获取机会名单&gt;&gt;</span>
    <span className="ml-auto whitespace-nowrap">尾盘狙击：交易</span>
    <span className="ml-[5px] w-[14px] overflow-hidden opacity-30">日</span>
    <span className="ml-[17px] h-[36px] w-[1.5px] bg-[#c9601f]" />
    <Close className="ml-[15px] mr-[39px] text-[#e0600f]" size={32} />
  </div>
);

const SECTIONS = ["股吧", "盘口", "资讯", "公告", "研报", "财务", "资料"];

const Sections = () => (
  <nav className="mt-[16px] flex h-[106px] items-start border-y-2 border-[#dadada] pl-[37px] text-[43px] leading-none tracking-[1px] text-[#666]">
    {SECTIONS.map((name, i) => (
      <div key={name} className={clsx("flex w-[163.7px] flex-col items-center pt-[29px]", i === 0 && "font-medium text-[#cc5f1f]")}>
        {name}
        {i === 0 && <span className="mt-[17px] h-[7px] w-[61px] rounded-full bg-[#dc5e18]" />}
      </div>
    ))}
  </nav>
);

const Cards = () => (
  <div className="flex h-[153px] gap-[22px] overflow-hidden pl-[38px] pt-[12px] leading-none">
    <div className="relative h-[200px] w-[538px] rounded-[20px] bg-linear-to-r from-[#fffaf6] to-[#fef4f5] pl-[22px] pt-[30px]">
      <svg width="260" height="141" viewBox="0 0 260 141" className="absolute right-0 top-0">
        <path d="M20 141V105H90V55H175V141H150V100H118V141Z" fill="#fdecec" />
        <path d="M175 141V20H245V141Z" fill="#fef0f2" />
      </svg>
      <div className="relative flex items-center">
        <svg width="48" height="48" viewBox="0 0 48 48">
          <defs>
            <linearGradient id="badge" x2="0" y2="1">
              <stop offset="0" stopColor="#cf4a4d" />
              <stop offset="1" stopColor="#f08a85" />
            </linearGradient>
          </defs>
          <circle cx="24" cy="24" r="24" fill="url(#badge)" />
          <path d="M9 20H16V36H9ZM18 12H30V36H18ZM32 24H39V36H32Z" fill="#fff" />
          <path d="M23 18L25 17V31" fill="none" stroke="#d9605f" strokeWidth="3" />
        </svg>
        <span className="ml-[13px] text-[41px] font-bold text-[#2a2724]">人气榜</span>
        <svg width="14" height="24" viewBox="0 0 14 24" className="ml-[15px]">
          <path d="M2 1L12 12L2 23" fill="none" stroke="#aaa" strokeWidth="2.5" />
        </svg>
      </div>
      <div className="relative mt-[26px] whitespace-nowrap text-[35.5px] tracking-[0.7px] text-[#555]">
        A股市场排名第<span className="font-bold text-[#c64f20]">256</span>名
      </div>
    </div>
    <div className="relative h-[200px] w-[536px] rounded-[20px] bg-linear-to-r from-[#fffaf6] to-[#fef1f3] pl-[20px] pt-[30px]">
      <svg width="230" height="110" viewBox="0 0 230 110" className="absolute right-[8px] top-[12px]" fill="none" stroke="#fce4e6" strokeWidth="22">
        <path d="M22 12L46 105M100 12L52 105" />
        <path d="M196 22Q140 8 132 38Q130 56 160 62Q190 72 170 105" />
      </svg>
      <div className="relative flex items-center">
        <span className="flex h-[48px] w-[48px] items-center justify-center rounded-full bg-linear-to-b from-[#cf4a4d] to-[#f08a85] text-[26px] font-bold italic text-white">
          VS
        </span>
        <span className="ml-[13px] text-[41px] font-bold text-[#2a2724]">多空看盘</span>
      </div>
      <div className="relative -ml-[2px] mt-[21px] flex h-[80px] w-[490px] gap-[4px] overflow-hidden rounded-t-[40px] border-4 border-white bg-white text-[34px] font-medium">
        <div className="flex flex-1 items-start bg-[#fbc9c9] text-[#cf4a33]">
          <span className="ml-[16px] mt-[8px] h-[70px] w-[70px] rounded-full bg-white" />
          <span className="ml-[26px] mt-[7px]">看涨</span>
        </div>
        <div className="flex flex-1 items-start bg-[#bfe6cb] text-[#2f9e57]">
          <span className="ml-[62px] mt-[7px]">看跌</span>
          <span className="ml-[20px] mt-[8px] h-[70px] w-[70px] rounded-full bg-white" />
        </div>
      </div>
    </div>
  </div>
);

const Action = ({ label, children }: { label: string; children: ReactNode }) => (
  <div className="flex w-[236.5px] flex-col items-center pt-[8px] text-[34.5px] leading-none text-[#5c6166]">
    <svg width="62" height="62" viewBox="0 0 62 62" fill="none" stroke="currentColor" strokeWidth="3">
      {children}
    </svg>
    <span className="mt-[17px]">{label}</span>
  </div>
);

const BottomBar = () => (
  <div className="flex h-[136px] border-t-2 border-[#d6dadd] bg-[#f6fafd] leading-none">
    <div className="w-[275px] text-[#c23c40]">
      <svg width="20" height="12" viewBox="0 0 20 12" className="ml-[128px] mt-[5px] block">
        <path d="M0 12L10 0L20 12Z" fill="#777" />
      </svg>
      <div className="mt-[11px] pl-[65px] text-[40px] tracking-[-0.5px]">3633.99</div>
      <div className="mt-[10px] flex items-center pl-[41px]">
        <span className="text-[35px] text-[#5c6166]">上证</span>
        <span className="ml-[51px] text-[38.5px] tracking-[-0.8px]">0.45%</span>
      </div>
    </div>
    <Action label="交易">
      <path d="M17 8A27 27 0 0 1 57 40M62 34L57 42L50 38M46 54A27 27 0 0 1 5 22M0 26L6 18L12 23" />
      <path d="M21 16L31 30L41 16M31 30V47M21 31H41M21 39H41" />
    </Action>
    <Action label="发帖">
      <path d="M42 4H12Q5 4 5 11V51Q5 58 12 58H50Q57 58 57 51V22" />
      <path d="M53 5L57 9L52 16L47 12ZM45 15L50 19L28 38L22 41L25 35Z" fill="currentColor" strokeWidth="1" />
    </Action>
    <Action label="功能">
      <rect x="6" y="5" width="22" height="22" rx="3" />
      <rect x="6" y="34" width="22" height="22" rx="3" />
      <rect x="34" y="34" width="22" height="22" rx="3" />
      <path d="M45 3L58 16L45 29L32 16Z" strokeLinejoin="round" />
    </Action>
    <Action label="设自选">
      <circle cx="31" cy="31" r="27" />
      <g fill="currentColor" stroke="none">
        <circle cx="20" cy="31" r="3" />
        <circle cx="31" cy="31" r="3" />
        <circle cx="42" cy="31" r="3" />
      </g>
    </Action>
  </div>
);

const SystemNav = () => (
  <div className="h-[142px]">
    <svg width="1220" height="142" viewBox="0 2570 1220 142" fill="none" stroke="#777" strokeWidth="5.5">
      <path d="M325 2620H363M325 2637H363M325 2654H363" strokeLinecap="round" />
      <rect x="590.5" y="2617.500" width="39" height="39" rx="8" />
      <path d="M888 2618L868 2634Q864 2637 868 2640L888 2656" strokeLinecap="round" />
    </svg>
  </div>
);

const Feather = ({ fill = "#ff5a00", className }: { fill?: string; className?: string }) => (
  <svg viewBox="0 0 72 72" className={className}>
    <rect width="72" height="72" rx="15" fill={fill} />
    <g fill="#fff">
      <path d="M46 8Q20 13 9 23V38Q18 26 30 26Q42 22 46 8Z" />
      <path d="M48 9Q44 24 20 35L24 48Q34 43 38 40Q49 26 48 9Z" />
      <path d="M51 9Q53 28 27 49L40 60Q46 52 47 42Q54 24 51 9Z" />
      <path d="M54 8Q67 22 61 38Q58 55 51 65L43 60Q51 50 52 40Q58 22 54 8Z" />
    </g>
  </svg>
);

const QR_SIZE = 57;

const inFinder = (x: number, y: number) =>
  (x < 8 && y < 8) || (x > QR_SIZE - 9 && y < 8) || (x < 8 && y > QR_SIZE - 9);

const qrPath = () => {
  let seed = 20250806;
  let d = "";
  for (let y = 0; y < QR_SIZE; y++) {
    for (let x = 0; x < QR_SIZE; x++) {
      seed = (seed * 1103515245 + 12345) % 2147483648;
      const centre = Math.abs(x - 28) < 6 && Math.abs(y - 28) < 6;
      if (!inFinder(x, y) && !centre && seed / 2147483648 < 0.5) {
        d += `M${x} ${y}h1v1h-1z`;
      }
    }
  }
  return d;
};

const QrCode = () => (
  <div className="relative flex h-[210px] w-[210px] items-center justify-center rounded-[16px] bg-white">
    <svg width="192" height="192" viewBox={`0 0 ${QR_SIZE} ${QR_SIZE}`} shapeRendering="crispEdges">
      <path d={qrPath()} />
      {[[0, 0], [QR_SIZE - 7, 0], [0, QR_SIZE - 7]].map(([x, y]) => (
        <g key={`${x}-${y}`}>
          <path d={`M${x} ${y}h7v7h-7zM${x + 1} ${y + 1}v5h5v-5z`} fillRule="evenodd" />
          <rect x={x + 2} y={y + 2} width="3" height="3" />
        </g>
      ))}
    </svg>
    <Feather fill="#dd560c" className="absolute h-[33px] w-[33px]" />
  </div>
);

const Footer = () => (
  <footer className="relative h-[271px] overflow-hidden">
    <svg width="1220" height="271" viewBox="0 2711 1220 271" className="absolute inset-0">
      <defs>
        <linearGradient id="warm">
          <stop offset="0.5" stopColor="#fff" />
          <stop offset="1" stopColor="#fffcf7" />
        </linearGradient>
        <linearGradient id="edge" x2="0" y2="1">
          <stop offset="0" stopColor="#cfcfcf" />
          <stop offset="1" stopColor="#fff" stopOpacity="0" />
        </linearGradient>
      </defs>
      <rect y="2711" width="1220" height="271" fill="url(#warm)" />
      <g fill="none" stroke="#fdf1e4" strokeWidth="2.5">
        <path d="M770 2712L880 2850L990 2982M690 2880L900 2765L1050 2712L1220 2812M790 2982L960 2850M680 2740L740 2982M1050 2712L990 2790M1050 2712L1020 2790M1050 2712V2790M1050 2712L1090 2790M1050 2712L1130 2780" />
      </g>
      <g fill="#feeee0">
        <path d="M893 2753H931V2857H893ZM910 2723H915V2905H910Z" />
        <path d="M833 2853H870V2920H833ZM850 2820H854V2970H850Z" />
        <path d="M772 2892H809V2982H772ZM789 2843H793V2900H789Z" />
        <path d="M954 2836H991V2982H954Z" />
      </g>
      <rect y="2711" width="1220" height="22" fill="url(#edge)" />
    </svg>
    <div className="relative flex justify-between pl-[72px] pr-[42px] pt-[30px]">
      <div className="pt-[33px] leading-none">
        <div className="flex items-center">
          <Feather className="h-[72px] w-[72px]" />
          <span className="ml-[12px] text-[49px] font-black text-[#ff5e0a]">东方财富</span>
        </div>
        <div className="mt-[28px] text-[36px] font-medium text-[#333]">来东方财富，看更多行情信息</div>
      </div>
      <QrCode />
    </div>
  </footer>
);

const App = () => (
  <main className="min-h-[2982px] w-[1220px] overflow-hidden bg-white font-['Lato','Noto_Sans_CJK_SC',sans-serif]">
    <StatusBar />
    <Header />
    <div className="flex h-[118px] items-center justify-between bg-[#ffeee6] pl-[37px] pr-[44px] text-[41.9px] leading-none text-[#cc6022]">
      <span>一键开通科创成长层权限！把握打新、交易机会</span>
      <Close className="text-[#d9641f]" size={33} />
    </div>
    <Quote />
    <News />
    <Periods />
    <MaLegend />
    <KChart />
    <MacdLegend />
    <MacdChart />
    <Promo />
    <Sections />
    <Cards />
    <BottomBar />
    <SystemNav />
    <Footer />
  </main>
);

export default App;
